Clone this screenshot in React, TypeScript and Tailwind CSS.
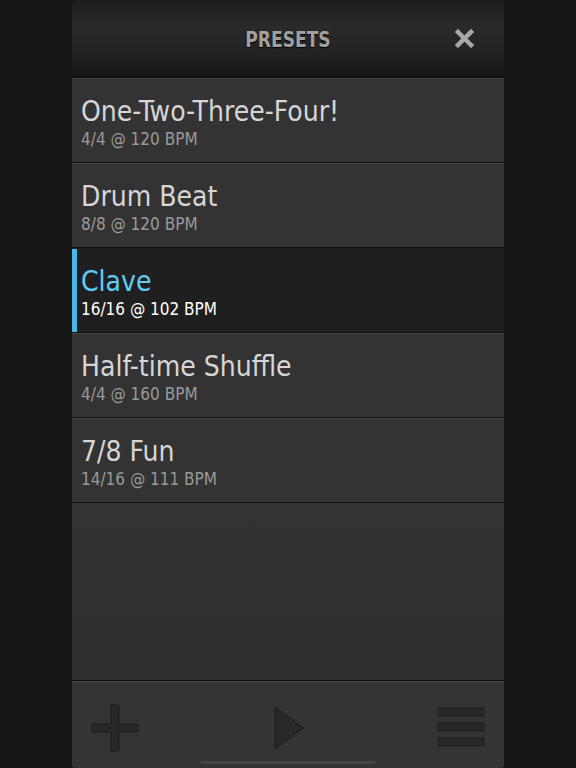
import React from 'react';

const presets = [
  { name: 'One-Two-Three-Four!', meta: '4/4 @ 120 BPM' },
  { name: 'Drum Beat', meta: '8/8 @ 120 BPM' },
  { name: 'Clave', meta: '16/16 @ 102 BPM', active: true },
  { name: 'Half-time Shuffle', meta: '4/4 @ 160 BPM' },
  { name: '7/8 Fun', meta: '14/16 @ 111 BPM' },
];

const font = { fontFamily: '"DejaVu Sans Condensed", "Roboto", sans-serif' };

const App: React.FC = () => {
  return (
    <div className="w-[576px] h-[768px] bg-[#151515] flex justify-center overflow-hidden" style={font}>
      <div className="w-[432px] h-full flex flex-col">
        {/* Header */}
        <div className="h-[78px] relative flex items-center justify-center rounded-t-[4px] bg-[linear-gradient(180deg,#1c1c1c_0%,#2a2a2a_35%,#222_70%,#141414_100%)] border-b border-[#0a0a0a]">
          <span className="mt-[2px] text-[19px] font-bold text-[#a0a0a0] [text-shadow:0_1px_1px_#000] scale-y-[1.12]">
            PRESETS
          </span>
          <svg className="absolute right-[30px] top-[29px]" width="19" height="19" viewBox="0 0 19 19">
            <path d="M3 3 L16 16 M16 3 L3 16" stroke="#a8a8a8" strokeWidth="4.5" strokeLinecap="square" />
          </svg>
        </div>

        {/* List */}
        <div className="flex flex-col">
          {presets.map((p) => (
            <div
              key={p.name}
              className={`h-[85px] flex border-t border-[#444] border-b border-b-[#111] ${
                p.active ? 'bg-[#1f1f1f] border-t-[#1f1f1f]' : 'bg-[#333333]'
              }`}
            >
              <div className={`w-[5px] ${p.active ? 'bg-[#45b8e8]' : ''}`} />
              <div className="pl-[4px] pt-[17px] flex flex-col">
                <span
                  className={`text-[28px] leading-[32px] ${p.active ? 'text-[#5fcdf5]' : 'text-[#d6d6d6]'}`}
                >
                  {p.name}
                </span>
                <span
                  className={`mt-[1px] text-[17px] leading-[20px] ${p.active ? 'text-white' : 'text-[#9a9a9a]'}`}
                >
                  {p.meta}
                </span>
              </div>
            </div>
          ))}
        </div>

        <div className="flex-1 bg-[linear-gradient(180deg,#333_0%,#2f2f2f_100%)] border-b border-[#0c0c0c]" />

        {/* Footer */}
        <div className="h-[87px] relative bg-[#343434] border-t border-[#4a4a4a] rounded-b-[3px] flex items-center justify-between px-[19px] pt-[5px]">
          <svg width="48" height="48" viewBox="0 0 48 48">
            <path d="M20 1 H28 V20 H47 V28 H28 V47 H20 V28 H1 V20 H20 Z" fill="#282828" stroke="#1c1c1c" strokeWidth="1" />
          </svg>
          <svg width="30" height="44" viewBox="0 0 30 44" className="ml-[2px]">
            <path d="M1 1 L29 22 L1 43 Z" fill="#282828" stroke="#1c1c1c" strokeWidth="1" />
          </svg>
          <svg width="48" height="42" viewBox="0 0 48 42">
            <rect x="1" y="1" width="46" height="8" fill="#282828" stroke="#1c1c1c" />
            <rect x="1" y="16" width="46" height="8" fill="#282828" stroke="#1c1c1c" />
            <rect x="1" y="31" width="46" height="8" fill="#282828" stroke="#1c1c1c" />
          </svg>
          <div className="absolute left-[128px] bottom-[4px] w-[176px] h-[3px] rounded-full bg-[#444]" />
        </div>
      </div>
    </div>
  );
};

export default App;
